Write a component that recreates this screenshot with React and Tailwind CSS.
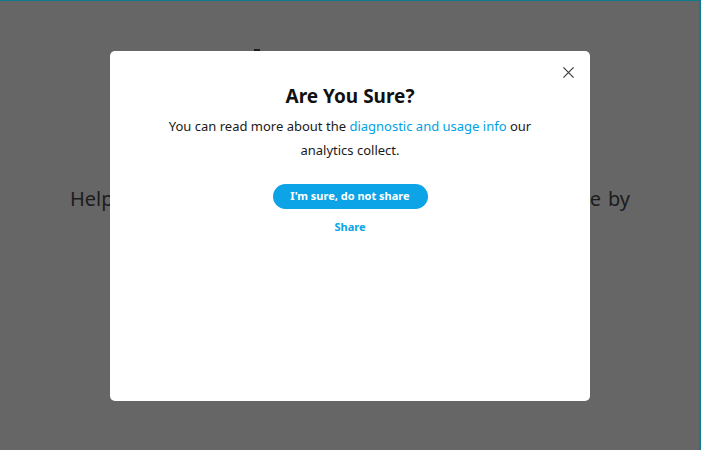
import React from "react";

export default function App() {
  const font = { fontFamily: '"Noto Sans", "Open Sans", sans-serif' };
  return (
    <div className="relative w-[701px] h-[450px] overflow-hidden bg-[#666666]" style={font}>
      {/* underlying page (dimmed) */}
      <div className="flex h-full border-t border-[#0b7a8a] border-r-2 border-r-[#0b7f90]">
        <div className="flex flex-col flex-1 pt-[184px] pl-[70px] pr-[69px] text-[20px] leading-[28px] text-[#1c1c1c]">
          <p className="whitespace-nowrap text-justify [text-align-last:justify]">
            Help us improve the app and make a better experience by
          </p>
          <p className="text-center">sharing your usage data.</p>
        </div>
      </div>
      <div className="absolute left-[254px] top-[49px] w-[6px] h-[2px] bg-[#1c1c1c]" />

      {/* modal */}
      <div className="absolute left-[110px] top-[51px] w-[480px] h-[350px] bg-white rounded-[5px] flex flex-col items-center pt-[32px]">
        <button className="absolute right-[16px] top-[16px] w-[11px] h-[11px] flex items-center justify-center">
          <svg width="11" height="11" viewBox="0 0 11 11" fill="none" stroke="#3c3c3c" strokeWidth="1.2">
            <path d="M0.4 0.4 L10.6 10.6 M10.6 0.4 L0.4 10.6" />
          </svg>
        </button>
        <h1 className="text-[19px] leading-[26px] font-bold text-[#111]">Are You Sure?</h1>
        <p className="mt-[5px] w-[380px] text-center text-[13px] leading-[24px] text-[#1a1a1a]">
          You can read more about the{" "}
          <span className="text-[#00a1e4]">diagnostic and usage info</span> our analytics collect.
        </p>
        <button className="mt-[22px] w-[155px] h-[25px] rounded-full bg-[#0ca3e7] text-white text-[11px] font-bold">
          I'm sure, do not share
        </button>
        <button className="mt-[10px] text-[11px] font-bold text-[#0ca3e7]">Share</button>
      </div>
    </div>
  );
}
